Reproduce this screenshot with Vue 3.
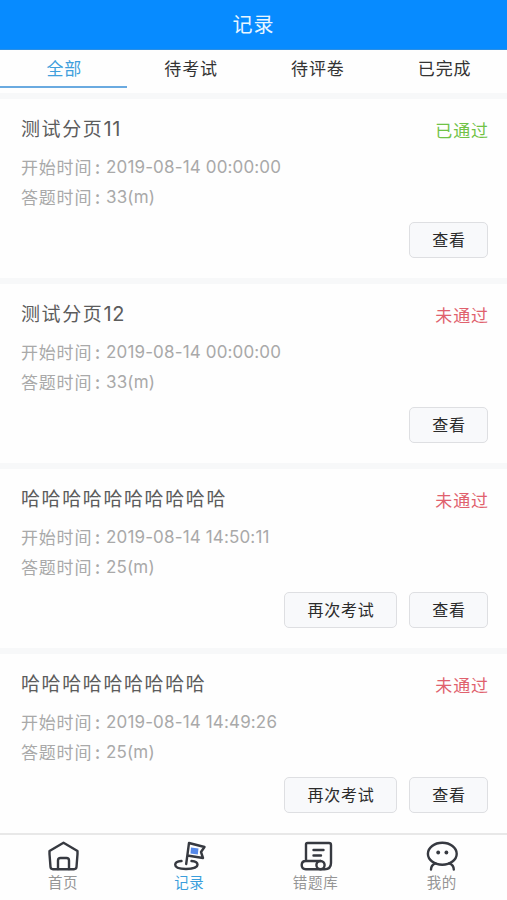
<template>
  <div class="page">
    <header class="header">记录</header>

    <nav class="tabs">
      <div
        v-for="(tab, index) in tabs"
        :key="tab"
        class="tab"
        :class="{ 'is-active': activeTab === index }"
        @click="activeTab = index"
      >
        {{ tab }}
      </div>
    </nav>

    <main class="list">
      <section v-for="record in records" :key="record.id" class="record">
        <div class="record-head">
          <h3>{{ record.title }}<span class="num">{{ record.no }}</span></h3>
          <span class="status" :class="{ 'is-passed': record.passed }">
            {{ record.passed ? '已通过' : '未通过' }}
          </span>
        </div>
        <p class="info"><span class="label">开始时间</span><span class="colon">:</span><span class="value">{{ record.start }}</span></p>
        <p class="info"><span class="label">答题时间</span><span class="colon">:</span><span class="value">{{ record.duration }}(m)</span></p>
        <div class="actions">
          <button v-if="record.retry" class="btn btn-retry">再次考试</button>
          <button class="btn">查看</button>
        </div>
      </section>
    </main>

    <footer class="tabbar">
      <div class="tabbar-item">
        <svg class="icon" viewBox="0 0 34 32">
          <path d="M17.500 2.800 3.500 11V14L4.500 27Q4.700 29.200 7 29.200H28Q30.300 29.200 30.500 27L31.500 14V11Z" />
          <path d="M12 29V20.500Q12 18 14.500 18H20.500Q23 18 23 20.500V29" />
        </svg>
        <span>首页</span>
      </div>
      <div class="tabbar-item is-active">
        <svg class="icon" viewBox="0 0 34 32">
          <path class="flag-fill" d="m19 7.500 7.500 1-.7 6-7.300-1z" />
          <path d="M14.200 24 17 3 32.500 7 29 12 31 18 15.300 15.500" />
          <path d="M9.500 21C5.500 21.300 3.200 22.800 3.200 24.800 3.200 27.500 8 29 14 29S25.500 27.500 25.500 24.800C25.500 22.800 23 21.300 19.500 21" />
        </svg>
        <span>记录</span>
      </div>
      <div class="tabbar-item">
        <svg class="icon" viewBox="0 0 34 32">
          <path d="M7 21V4.500Q7 3 8.500 3H30Q32 3 32 5V23Q32 29.200 25.500 29.200H6.800Q2.700 29.200 2.700 25.100T6.800 21H21.500" />
          <circle cx="21.500" cy="25.100" r="4.100" />
          <path d="M14.500 10H24.500M14.500 15.500H22" />
        </svg>
        <span>错题库</span>
      </div>
      <div class="tabbar-item">
        <svg class="icon" viewBox="0 0 34 32">
          <ellipse cx="17.300" cy="13.800" rx="14.400" ry="11" />
          <path d="M10.500 23.300Q6 25 6 29.500M24.300 23.300Q28.800 25 28.800 29.500" />
          <circle class="eye" cx="13.200" cy="12.500" r="1.900" />
          <circle class="eye" cx="21.400" cy="12.500" r="1.900" />
        </svg>
        <span>我的</span>
      </div>
    </footer>
  </div>
</template>

<script setup>
import { ref } from 'vue'

const tabs = ['全部', '待考试', '待评卷', '已完成']
const activeTab = ref(0)

const records = [
  { id: 1, title: '测试分页', no: '11', passed: true, start: '2019-08-14 00:00:00', duration: 33, retry: false },
  { id: 2, title: '测试分页', no: '12', passed: false, start: '2019-08-14 00:00:00', duration: 33, retry: false },
  { id: 3, title: '哈哈哈哈哈哈哈哈哈哈', no: '', passed: false, start: '2019-08-14 14:50:11', duration: 25, retry: true },
  { id: 4, title: '哈哈哈哈哈哈哈哈哈', no: '', passed: false, start: '2019-08-14 14:49:26', duration: 25, retry: true },
]
</script>

<style>
body {
  margin: 0;
}
</style>

<style scoped>
.page {
  display: flex;
  flex-direction: column;
  height: 900px;
  overflow: hidden;
  background: #fefefe;
  font-family: 'Noto Sans CJK SC', sans-serif;
}
.header {
  flex: none;
  height: 50px;
  line-height: 47px;
  border-bottom: 1px solid #2d8fe3;
  box-sizing: border-box;
  background: #078bff;
  color: #e9f6ff;
  font-size: 20px;
  letter-spacing: 1px;
  text-align: center;
}
.tabs {
  flex: none;
  display: flex;
  height: 38px;
}
.tab {
  flex: 1;
  box-sizing: border-box;
  padding-left: 2px;
  border-bottom: 2px solid transparent;
  color: #333;
  font-size: 17px;
  line-height: 36px;
  letter-spacing: 0.9px;
  text-align: center;
}
.tab.is-active {
  color: #409fdc;
  border-bottom-color: #6aaae0;
}
.list {
  flex: 1;
  min-height: 0;
  margin-top: 5px;
  overflow: hidden;
}
.record {
  box-sizing: border-box;
  height: 185px;
  padding: 16px 19px 0 21px;
  border-top: 6px solid #f7f8f9;
}
.record-head {
  display: flex;
  justify-content: space-between;
  height: 37px;
}
.record-head h3 {
  margin: 0;
  color: #5c5c5c;
  font-size: 19px;
  font-weight: 400;
  line-height: 26px;
  letter-spacing: 1.6px;
}
.num {
  font-family: Inter, sans-serif;
  font-size: 20px;
  letter-spacing: 0.8px;
}
.status {
  color: #e0616d;
  font-size: 17px;
  line-height: 30px;
  letter-spacing: 0.9px;
  margin-right: -1px;
}
.status.is-passed {
  color: #70c246;
}
.info {
  display: flex;
  margin: 0;
  height: 30px;
  line-height: 29px;
  color: #a9a9a9;
  font-size: 17px;
}
.label {
  width: 72px;
  letter-spacing: 0.8px;
}
.colon {
  width: 13px;
  text-indent: 2px;
  font-weight: 500;
}
.value {
  font-family: Inter, sans-serif;
  font-size: 17px;
  line-height: 30px;
  letter-spacing: 0.15px;
  white-space: pre;
}
.actions {
  display: flex;
  justify-content: flex-end;
  gap: 12px;
  margin-top: 10px;
}
.btn {
  width: 79px;
  height: 36px;
  padding: 0 0 2px 1px;
  border: 1px solid #dedfe2;
  border-radius: 5px;
  background: #f8f9fb;
  color: #2b2b2b;
  font-family: inherit;
  font-size: 16px;
  letter-spacing: 0.8px;
}
.btn-retry {
  width: 113px;
}
.tabbar {
  flex: none;
  display: flex;
  box-sizing: border-box;
  height: 67px;
  padding-right: 2px;
  border-top: 2px solid #e8e8e8;
}
.tabbar-item {
  flex: 1;
  display: flex;
  flex-direction: column;
  align-items: center;
  padding-top: 5px;
  color: #959595;
  font-size: 14.5px;
  line-height: 20px;
  letter-spacing: 0.7px;
}
.tabbar-item.is-active {
  color: #3a9edc;
}
.icon {
  width: 34px;
  height: 32px;
  fill: none;
  stroke: #363940;
  stroke-width: 2.4;
  stroke-linecap: round;
  stroke-linejoin: round;
}
.flag-fill {
  fill: #5588e8;
  stroke: none;
}
.eye {
  fill: #363940;
  stroke: none;
}
</style>
